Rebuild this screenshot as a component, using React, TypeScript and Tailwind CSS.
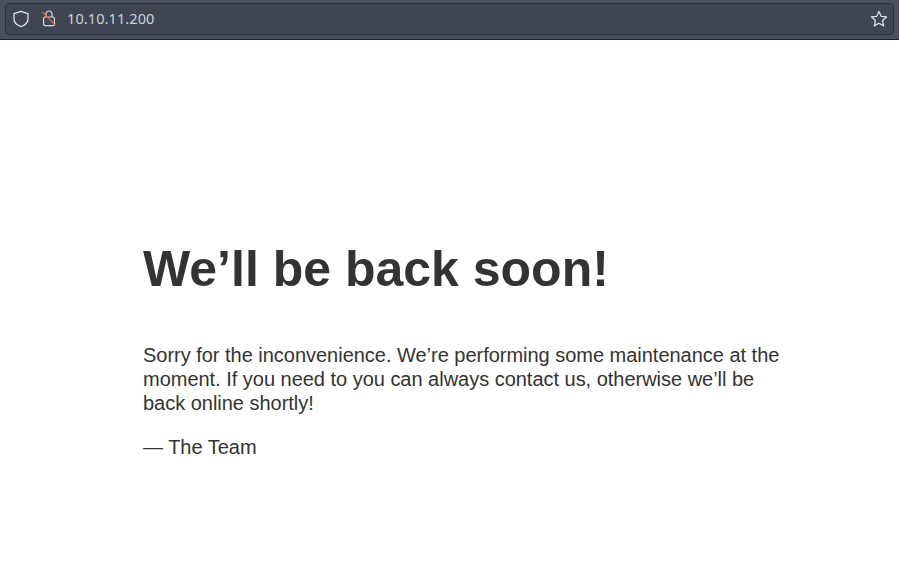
import React from "react";

const ShieldIcon = () => (
  <svg width="18" height="18" viewBox="0 0 18 18" fill="none" stroke="#dfe1e6" strokeWidth="1.3">
    <path d="M9 1.4l7 2.3v5c0 3.8-3 6.6-7 8-4-1.4-7-4.2-7-8v-5l7-2.3z" strokeLinejoin="round" />
  </svg>
);

const LockIcon = () => (
  <svg width="16" height="18" viewBox="0 0 16 18" fill="none">
    <path d="M4 7V4a3 3 0 016 0v3" stroke="#d5d8de" strokeWidth="1.2" />
    <rect x="1.6" y="7" width="10.8" height="8.6" rx="1.4" stroke="#d5d8de" strokeWidth="1.2" />
    <path d="M0.5 2l13 13.6" stroke="#e2673f" strokeWidth="1.2" />
  </svg>
);

const StarIcon = () => (
  <svg width="18" height="18" viewBox="0 0 17 17" fill="none" stroke="#dfe1e6" strokeWidth="1.2" strokeLinejoin="round">
    <path d="M8.5 1.4l2.1 4.6 5 .6-3.7 3.4 1 5-4.4-2.5-4.4 2.5 1-5L1.4 6.6l5-.6 2.1-4.6z" />
  </svg>
);

export default function App() {
  return (
    <div className="flex h-[562px] w-[899px] flex-col overflow-hidden bg-white font-['Liberation_Sans',Arial,sans-serif]">
      {/* Browser toolbar */}
      <div className="h-[40px] border-b border-[#1f2229] bg-[#4a4f5c] px-[5px] pt-[3px]">
        <div className="flex h-[32px] items-center rounded-[4px] border border-[#2e323b] bg-[#3f4552] pl-[6px] pr-[5px]">
          <ShieldIcon />
          <div className="ml-[12px]">
            <LockIcon />
          </div>
          <div className="ml-[9px] font-['Noto_Sans',sans-serif] text-[14.5px] tracking-[0.1px] text-[#cfd2d9]">10.10.11.200</div>
          <div className="ml-auto">
            <StarIcon />
          </div>
        </div>
      </div>

      {/* Page */}
      <div className="ml-[143px] w-[650px] pt-[200px] text-[#333333]">
        <h1 className="text-[50px] leading-[58px] font-bold">We’ll be back soon!</h1>
        <div className="mt-[45px] text-[20px] leading-[24px] tracking-[-0.02px]">
          <p>Sorry for the inconvenience. We’re performing some maintenance at the moment. If you need to you can always contact us, otherwise we’ll be back online shortly!</p>
          <p className="mt-[20px]">— The Team</p>
        </div>
      </div>
    </div>
  );
}
